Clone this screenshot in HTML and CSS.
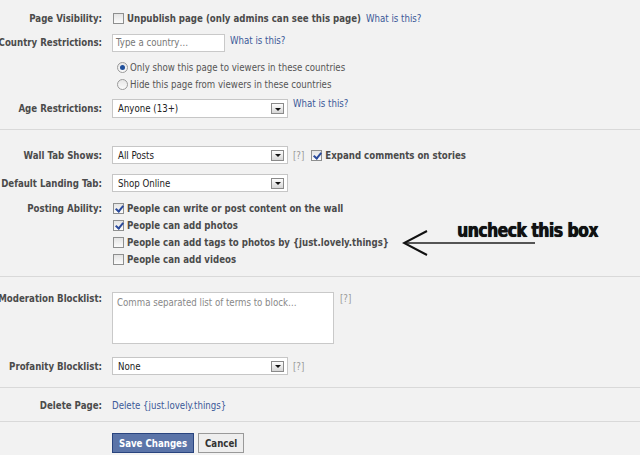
FILE: index.html
```html
<!DOCTYPE html>
<html>
<head>
<meta charset="utf-8">
<link rel="stylesheet" href="styles.css">
</head>
<body>
<div class="page">
  <section class="sec s1">
    <div class="row r-vis">
      <div class="lbl">Page Visibility:</div>
      <div class="ctl"><span class="cb"></span><span class="opt">Unpublish page (only admins can see this page)</span><a class="help">What is this?</a></div>
    </div>
    <div class="row r-country">
      <div class="lbl">Country Restrictions:</div>
      <div class="ctl"><span class="inp">Type a country…</span><a class="help up">What is this?</a></div>
    </div>
    <div class="radios">
      <div class="radio-row"><span class="rb on"></span><span class="plain">Only show this page to viewers in these countries</span></div>
      <div class="radio-row"><span class="rb"></span><span class="plain">Hide this page from viewers in these countries</span></div>
    </div>
    <div class="row r-age">
      <div class="lbl">Age Restrictions:</div>
      <div class="ctl"><span class="sel"><span class="val">Anyone (13+)</span><span class="btn"></span></span><a class="help up">What is this?</a></div>
    </div>
  </section>

  <section class="sec s2">
    <div class="row r-wall">
      <div class="lbl">Wall Tab Shows:</div>
      <div class="ctl"><span class="sel"><span class="val">All Posts</span><span class="btn"></span></span><span class="q">[?]</span><span class="cb on"></span><span class="opt">Expand comments on stories</span></div>
    </div>
    <div class="row r-land">
      <div class="lbl">Default Landing Tab:</div>
      <div class="ctl"><span class="sel"><span class="val">Shop Online</span><span class="btn"></span></span></div>
    </div>
    <div class="row r-post">
      <div class="lbl">Posting Ability:</div>
      <div class="checks">
        <div class="check-row"><span class="cb on"></span><span class="opt">People can write or post content on the wall</span></div>
        <div class="check-row"><span class="cb on"></span><span class="opt">People can add photos</span></div>
        <div class="check-row"><span class="cb"></span><span class="opt">People can add tags to photos by {just.lovely.things}</span></div>
        <div class="check-row"><span class="cb"></span><span class="opt">People can add videos</span></div>
      </div>
    </div>
    <div class="note">
      <svg class="arrow" width="140" height="30" viewBox="0 0 140 30">
        <line x1="2" y1="13" x2="133" y2="13" stroke="#555" stroke-width="2"/>
        <polyline points="25,1 2,13 25,25" fill="none" stroke="#111" stroke-width="2"/>
      </svg>
      <span class="note-text">uncheck this box</span>
    </div>
  </section>

  <section class="sec s3">
    <div class="row r-mod">
      <div class="lbl">Moderation Blocklist:</div>
      <div class="ctl top"><span class="ta">Comma separated list of terms to block…</span><span class="q">[?]</span></div>
    </div>
    <div class="row r-prof">
      <div class="lbl">Profanity Blocklist:</div>
      <div class="ctl"><span class="sel"><span class="val">None</span><span class="btn"></span></span><span class="q">[?]</span></div>
    </div>
  </section>

  <section class="sec s4">
    <div class="row r-del">
      <div class="lbl">Delete Page:</div>
      <div class="ctl"><a class="link">Delete {just.lovely.things}</a></div>
    </div>
  </section>

  <section class="sec s5">
    <div class="row r-btns">
      <div class="lbl"></div>
      <div class="ctl"><span class="button primary">Save Changes</span><span class="button">Cancel</span></div>
    </div>
  </section>
</div>
</body>
</html>
```

FILE: styles.css
```css
html, body {
  margin: 0;
  padding: 0;
  background: #f2f2f2;
}
body {
  font-family: "DejaVu Sans", sans-serif;
  font-stretch: condensed;
  font-size: 9.6px;
  color: #333;
  width: 640px;
  height: 455px;
  overflow: hidden;
}
.page {
  position: relative;
}
.sec {
  border-bottom: 1px solid #d9d9d9;
}
.s1 { padding: 9px 0 11px; }
.s2 { padding: 16px 0 8px; position: relative; }
.s3 { padding: 15px 0 12px; }
.s4 { padding: 9px 0 7px; }
.s5 { padding: 11px 0 0; border-bottom: none; }

.row {
  display: grid;
  grid-template-columns: 102px 1fr;
  column-gap: 10px;
  align-items: center;
}
.lbl {
  display: flex;
  justify-content: flex-end;
  white-space: nowrap;
  min-width: 0;
  font-weight: bold;
  color: #4b4b4b;
}
.ctl {
  display: flex;
  align-items: center;
  white-space: nowrap;
}
.ctl.top { align-items: flex-start; }

.r-vis { height: 19px; }
.r-country { height: 19px; margin-top: 5px; }
.r-age { height: 19px; margin-top: 6px; }
.r-wall { height: 18px; }
.r-land { height: 18px; margin-top: 10px; }
.r-post { margin-top: 8px; align-items: start; }
.r-post .lbl { height: 17px; align-items: center; }
.r-mod { align-items: start; }
.r-mod .lbl { margin-top: 1px; }
.r-prof { height: 18px; margin-top: 13px; }
.r-del { height: 17px; }
.r-btns { height: 20px; }

.cb {
  width: 11px;
  height: 11px;
  box-sizing: border-box;
  border: 1px solid #8e8f8f;
  background: linear-gradient(#e4e4e4, #fbfbfb);
  margin: 0 3px 0 1px;
  flex: none;
  position: relative;
}
.cb.on::after {
  content: "";
  position: absolute;
  left: 3px;
  top: 0px;
  width: 3px;
  height: 6px;
  border-right: 2px solid #2a4a9c;
  border-bottom: 2px solid #2a4a9c;
  transform: rotate(40deg);
}
.opt {
  font-weight: bold;
  color: #4b4b4b;
}
.help {
  color: #3b5998;
  margin-left: 5px;
}
.help.up { align-self: flex-start; margin-top: 1px; }
.r-age .help.up { margin-top: -1px; }

.inp {
  width: 113px;
  height: 18px;
  box-sizing: border-box;
  border: 1px solid #c9c9c9;
  background: #fff;
  color: #777;
  padding-left: 3px;
  display: flex;
  align-items: center;
}

.radios { margin-top: 7px; margin-left: 112px; }
.radio-row {
  height: 17px;
  display: flex;
  align-items: center;
  white-space: nowrap;
}
.rb {
  width: 11px;
  height: 11px;
  box-sizing: border-box;
  border: 1px solid #9a9a9a;
  border-radius: 50%;
  background: linear-gradient(#e6e6e6, #fafafa);
  margin: 0 2px 0 5px;
  position: relative;
  flex: none;
}
.rb.on::after {
  content: "";
  position: absolute;
  left: 2px;
  top: 2px;
  width: 5px;
  height: 5px;
  border-radius: 50%;
  background: #1f4f9b;
}
.plain { color: #555; }

.sel {
  width: 176px;
  height: 19px;
  box-sizing: border-box;
  border: 1px solid #c6c6c6;
  background: #fff;
  display: flex;
  align-items: center;
  justify-content: space-between;
  padding: 0 3px 0 5px;
  flex: none;
}
.r-wall .sel, .r-land .sel, .r-prof .sel { height: 18px; }
.sel .val { color: #222; }
.sel .btn {
  width: 13px;
  height: 11px;
  box-sizing: border-box;
  border: 1px solid #8a8a8a;
  background: linear-gradient(#fdfdfd, #d6d6d6);
  display: flex;
  align-items: center;
  justify-content: center;
}
.sel .btn::after {
  content: "";
  border-left: 3px solid transparent;
  border-right: 3px solid transparent;
  border-top: 3px solid #111;
  margin-top: 1px;
}
.q {
  color: #999;
  margin-left: 5px;
  margin-right: 6px;
}
.r-mod .q { margin-left: 6px; margin-top: 1px; }

.checks { display: flex; flex-direction: column; }
.check-row {
  height: 17px;
  display: flex;
  align-items: center;
  white-space: nowrap;
}

.note {
  position: absolute;
  left: 402px;
  top: 100px;
  display: flex;
  align-items: center;
}
.arrow { display: block; }
.note-text {
  position: absolute;
  left: 55px;
  top: -12px;
  font-family: "DejaVu Sans", sans-serif;
  font-stretch: condensed;
  font-weight: bold;
  font-size: 20px;
  color: #111;
  white-space: nowrap;
  transform: scaleX(0.86);
  transform-origin: left center;
  letter-spacing: -0.5px;
  text-shadow: 0.7px 0 0 #111, 0 0 1px #555;
}

.ta {
  width: 222px;
  height: 52px;
  box-sizing: border-box;
  border: 1px solid #c9c9c9;
  background: #fff;
  color: #888;
  padding: 4px 0 0 4px;
}

.link { color: #3b5998; }

.button {
  height: 20px;
  box-sizing: border-box;
  display: flex;
  align-items: center;
  padding: 0 6px;
  font-weight: bold;
  border: 1px solid #999;
  background: #eee;
  color: #333;
  margin-right: 4px;
  font-size: 9.6px;
}
.button.primary {
  background: #5b74a8;
  border-color: #29447e;
  color: #fff;
  width: 82px;
  justify-content: center;
}
```
